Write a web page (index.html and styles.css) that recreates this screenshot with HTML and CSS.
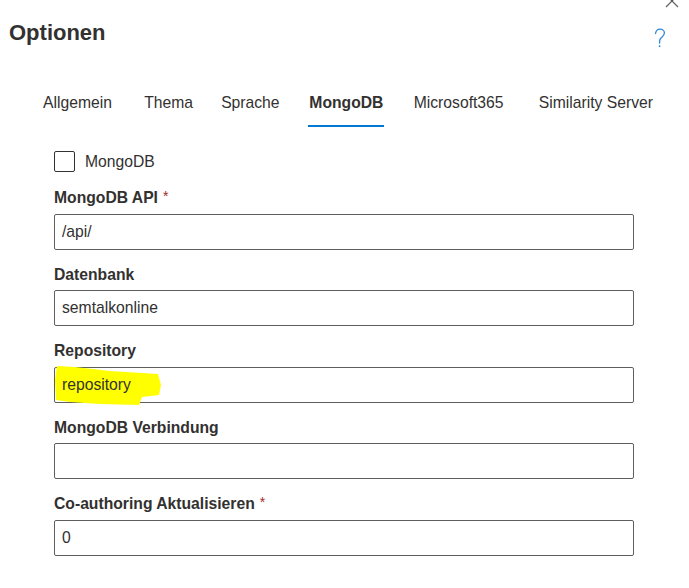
FILE: index.html
```html
<!DOCTYPE html>
<html lang="de">
<head>
<meta charset="utf-8">
<title>Optionen</title>
<link rel="stylesheet" href="styles.css">
</head>
<body>
<div class="dialog">
  <header class="head">
    <h1 class="title">Optionen</h1>
    <svg class="help" width="12" height="20" viewBox="0 0 12 20" aria-label="Hilfe">
      <path d="M1.6 5.6 C1.6 2.8 3.5 1.2 6 1.2 C8.5 1.2 10.4 2.9 10.4 5.1 C10.4 7.4 8.6 8.5 7.2 9.8 C6.1 10.8 5.6 11.8 5.6 13.4 V15" fill="none" stroke="#2b88d8" stroke-width="1.3" stroke-linecap="round"/>
      <circle cx="5.6" cy="18.2" r="0.9" fill="#2b88d8"/>
    </svg>
  </header>
  <button class="close" aria-label="Schließen">
    <svg width="14" height="14" viewBox="0 0 14 14"><path d="M1 1 L13 13 M13 1 L1 13" stroke="#605e5c" stroke-width="1.2" fill="none"/></svg>
  </button>
  <nav class="tabs">
    <span class="tab" data-text="Allgemein">Allgemein</span>
    <span class="tab" data-text="Thema">Thema</span>
    <span class="tab" data-text="Sprache">Sprache</span>
    <span class="tab active" data-text="MongoDB">MongoDB</span>
    <span class="tab" data-text="Microsoft365">Microsoft365</span>
    <span class="tab" data-text="Similarity Server">Similarity Server</span>
  </nav>
  <main class="content">
    <label class="check"><span class="box"></span><span class="check-label">MongoDB</span></label>
    <div class="field">
      <div class="label">MongoDB API<span class="req">*</span></div>
      <div class="input"><span class="value">/api/</span></div>
    </div>
    <div class="field">
      <div class="label">Datenbank</div>
      <div class="input"><span class="value">semtalkonline</span></div>
    </div>
    <div class="field">
      <div class="label">Repository</div>
      <div class="input">
        <svg class="marker" width="110" height="40" viewBox="0 0 110 40"><polygon points="3,-1 21,0 56,4 104,7 107,18 105,28 88,30 85,38 46,37 16,35 2,33 1,13" fill="#ffff00"/></svg>
        <span class="value">repository</span>
      </div>
    </div>
    <div class="field">
      <div class="label">MongoDB Verbindung</div>
      <div class="input"><span class="value"></span></div>
    </div>
    <div class="field">
      <div class="label">Co-authoring Aktualisieren<span class="req">*</span></div>
      <div class="input"><span class="value">0</span></div>
    </div>
  </main>
</div>
</body>
</html>
```
FILE: styles.css
```css
html, body {
  margin: 0;
  padding: 0;
  background: #ffffff;
}
body {
  font-family: "Liberation Sans", Arial, sans-serif;
  font-size: 15.7px;
  color: #323130;
}
.dialog {
  position: relative;
  width: 689px;
  height: 588px;
  overflow: hidden;
}
.head {
  box-sizing: border-box;
  height: 80px;
  display: flex;
  justify-content: space-between;
  align-items: flex-start;
  padding: 20px 23px 0 9px;
}
.title {
  margin: 0;
  font-size: 22px;
  line-height: 25px;
  font-weight: 700;
  color: #323130;
}
.help {
  display: block;
  margin-top: 8px;
}
.close {
  position: absolute;
  top: -6px;
  right: 10px;
  padding: 0;
  margin: 0;
  border: 0;
  background: transparent;
  width: 14px;
  height: 14px;
}
.close svg {
  display: block;
}
.tabs {
  display: flex;
  padding-left: 34px;
  height: 47px;
}
.tab {
  position: relative;
  display: inline-flex;
  flex-direction: column;
  padding: 0 9px;
  margin-right: 8.3px;
  height: 47px;
  line-height: 46px;
  white-space: nowrap;
  color: #323130;
}
.tab:nth-child(4) {
  margin-right: 12.3px;
}
.tab:nth-child(5) {
  margin-right: 10.3px;
}
.tab::before {
  content: attr(data-text);
  font-weight: 700;
  height: 0;
  overflow: hidden;
  visibility: hidden;
}
.tab.active {
  font-weight: 700;
}
.tab.active::after {
  content: "";
  position: absolute;
  left: 8px;
  right: 8px;
  bottom: 0;
  height: 2px;
  background: #0078d4;
}
.content {
  display: flex;
  flex-direction: column;
  width: 580px;
  padding: 24px 0 0 54px;
}
.check {
  display: flex;
  align-items: center;
  gap: 10px;
  height: 21px;
  margin-bottom: 8.5px;
}
.box {
  box-sizing: border-box;
  width: 21px;
  height: 21px;
  border: 1px solid #323130;
  border-radius: 2px;
  background: #ffffff;
}
.check-label {
  line-height: 21px;
}
.field {
  display: flex;
  flex-direction: column;
  margin-bottom: 7.5px;
}
.label {
  padding: 6.5px 0 4.5px;
  line-height: 22px;
  font-weight: 700;
  color: #323130;
}
.req {
  color: #a4262c;
  padding-left: 5px;
  font-weight: 400;
  font-size: 14px;
  vertical-align: top;
  line-height: 18px;
}
.input {
  position: relative;
  box-sizing: border-box;
  height: 36px;
  border: 1px solid #605e5c;
  border-radius: 2px;
  padding: 0 7px;
  line-height: 34px;
  background: #ffffff;
}
.value {
  position: relative;
  z-index: 1;
}
.marker {
  position: absolute;
  left: -1px;
  top: -1px;
  overflow: visible;
  z-index: 0;
}
```
